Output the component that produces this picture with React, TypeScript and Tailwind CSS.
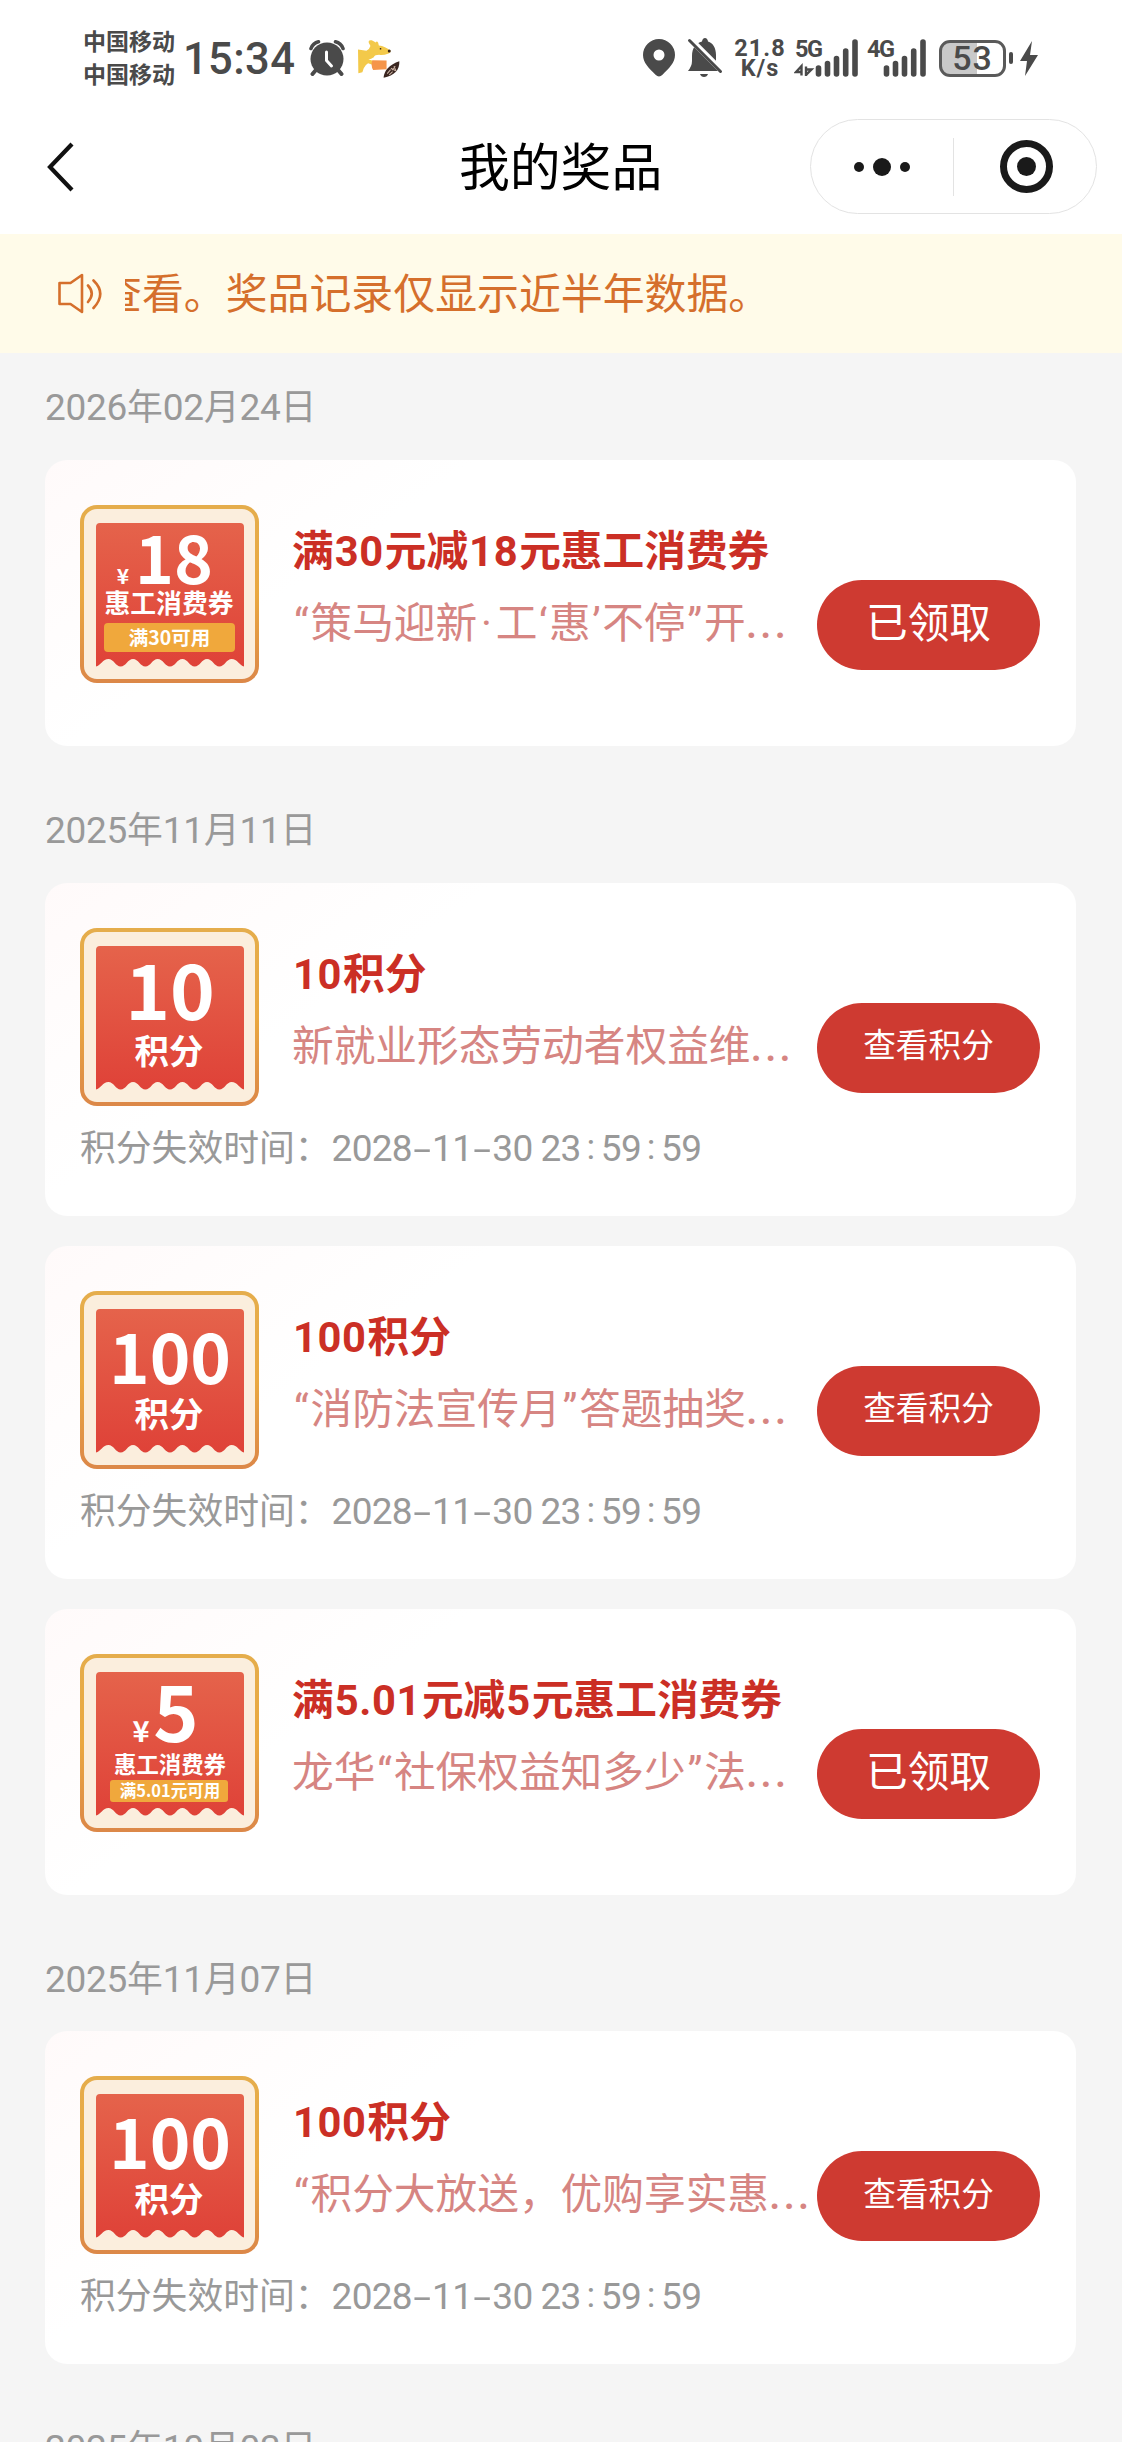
import React from 'react';

const SC = '"Noto Sans CJK SC", sans-serif';
const INK = '#4a4a4a';

function StatusBar() {
  return (
    <div className="flex h-[104px] items-center justify-between pl-[83px] pr-[84px] pt-[12px] text-[#4a4a4a]">
      <div className="flex items-center">
        <div className="flex flex-col pt-[2px] text-[23px] font-bold leading-[33px]">
          <span>中国移动</span>
          <span>中国移动</span>
        </div>
        <div className="ml-[8px] w-[112px] pt-[3px] text-[43.5px] font-medium leading-[60px] tracking-[0.4px]">15:34</div>
        <svg className="ml-[14px] h-[36px] w-[36px] shrink-0" viewBox="0 0 36 36" fill="none">
          <circle cx="18" cy="19" r="16.500" fill={INK} />
          <path d="M2 8.500Q4 3 9.500 1.800M34 8.500Q32 3 26.500 1.800" stroke={INK} strokeWidth="3.600" strokeLinecap="round" />
          <path d="M6.500 30.500l-3 3.500M29.500 30.500l3 3.500" stroke={INK} strokeWidth="4" strokeLinecap="round" />
          <path d="M17.500 12v8.500l5 5.500" stroke="#fff" strokeWidth="3" strokeLinecap="round" strokeLinejoin="round" />
        </svg>
        <svg className="ml-[12px] h-[41px] w-[43px] shrink-0" viewBox="172 28 128 122">
          <path
            d="M175 62L200 66Q210 60 212 52L207 42Q205 33 216 35L228 41Q231 35 235 42L237 50Q256 52 272 66Q272 73 266 74Q250 80 238 78Q225 78 222 85Q214 91 206 92L220 96V108L205 103Q196 108 192 118L188 130L176 133Z"
            fill="#f3c94a"
          />
          <path d="M218 94l42 1v26l-40 2q-8-14-2-29z" fill="#f5954a" />
          <circle cx="268" cy="67" r="4.500" fill="#3a2418" />
          <circle cx="242" cy="60" r="2.500" fill="#3a2418" />
          <path d="M251 146Q254 112 298 97Q300 136 251 146z" fill="#3a2620" />
          <path d="M262 134l10-12M268 138l10-10M273 118l14 8M282 112l6 14M276 124l10-12" stroke="#cbb3a4" strokeWidth="3" />
        </svg>
      </div>
      <div className="flex items-center">
        <svg className="h-[38px] w-[32px]" viewBox="0 0 32 38">
          <path fillRule="evenodd" d="M16 0a16 16 0 0 1 16 16c0 8-6 13-12.500 19.800q-3.500 3.500-7 0C6 29 0 24 0 16A16 16 0 0 1 16 0zm0 10.500a5.500 5.500 0 1 0 0 11 5.500 5.500 0 0 0 0-11z" fill={INK} />
        </svg>
        <svg className="ml-[12px] h-[40px] w-[36px]" viewBox="0 0 36 40">
          <path d="M1 33q4-5 4-10v-5c0-8 4-13 10-14.500Q15.500 0 18 0t3 3.500C26 5 29 10 29 17v6q0 5 3.500 10z" fill={INK} />
          <path d="M13 36h8q-1 3-4 3t-4-3z" fill={INK} />
          <path d="M3 1l33 33" stroke="#fff" strokeWidth="6" />
          <path d="M2.500 2.500l31 31" stroke={INK} strokeWidth="3" strokeLinecap="round" />
        </svg>
        <div className="ml-[11px] flex w-[52px] flex-col items-center text-[23.5px] font-bold leading-[20.5px]">
          <span className="tracking-[1px]">21.8</span>
          <span className="tracking-[1px]">K/s</span>
        </div>
        <Signal label="5G" arrows />
        <Signal label="4G" />
        <div className="ml-[13px] flex items-center">
          <div className="flex h-[37px] w-[67px] items-center justify-center rounded-[11px] border-[3px] border-[#5a5a5a] bg-[linear-gradient(90deg,#c9c9c9_57%,#fff_57%)] text-[34px] font-medium leading-[30px] tracking-[1px]">
            53
          </div>
          <div className="ml-[3px] h-[12px] w-[4px] rounded-full bg-[#4a4a4a]" />
          <svg className="ml-[7px] h-[35px] w-[18px]" viewBox="0 0 18 35">
            <path d="M12 0L0 20h7l-2 15L18 14h-8z" fill={INK} />
          </svg>
        </div>
      </div>
    </div>
  );
}

function Signal({ label, arrows = false }: { label: string; arrows?: boolean }) {
  return (
    <div className={arrows ? 'relative ml-[9px] h-[38px] w-[63px]' : 'relative ml-[9px] h-[38px] w-[59px]'}>
      <span className="absolute left-0 top-0 text-[23.5px] font-bold leading-[20px] tracking-[-1.5px]">{label}</span>
      <svg className="absolute right-0 top-0 h-[38px] w-[64px]" viewBox="0 0 64 38">
        <path d="M24.500 35v-6M33.500 35V24.500M42.500 35V19.500M51.700 35V12M61 35V3" stroke={INK} strokeWidth="5.600" strokeLinecap="round" />
        {arrows && <path d="M7.500 36.500V27l-5.500 6h5M12 27.500v9.500M12 36l5.500-5.500h-5" stroke={INK} strokeWidth="2.400" fill="none" />}
      </svg>
    </div>
  );
}

function NavBar() {
  return (
    <div className="flex h-[130px] items-center pl-[45px] pr-[25px]">
      <svg className="mt-[-4px] h-[50px] w-[40px]" viewBox="0 0 40 50" fill="none">
        <path d="M27 2L5 25l22 23" stroke="#111" strokeWidth="4.200" />
      </svg>
      <h1 className="ml-[374px] text-[50.8px] font-normal text-black">我的奖品</h1>
      <div className="ml-auto mt-[-5px] flex h-[95px] w-[287px] items-center rounded-full border border-[#e3e3e3] bg-white">
        <div className="flex w-[142px] items-center justify-center gap-[9px]">
          <i className="size-[10px] rounded-full bg-[#1a1a1a]" />
          <i className="size-[18px] rounded-full bg-[#1a1a1a]" />
          <i className="size-[10px] rounded-full bg-[#1a1a1a]" />
        </div>
        <div className="h-[58px] w-px bg-[#e3e3e3]" />
        <div className="flex flex-1 items-center justify-center pl-[3px]">
          <div className="flex size-[53px] items-center justify-center rounded-full border-[7px] border-[#1a1a1a]">
            <i className="size-[19px] rounded-full bg-[#1a1a1a]" />
          </div>
        </div>
      </div>
    </div>
  );
}

function Notice() {
  return (
    <div className="flex h-[119px] items-center bg-[#fffbe9] pl-[56px] text-[#d56f2c]">
      <svg className="h-[44px] w-[46px] shrink-0" viewBox="0 0 46 44" fill="none" stroke="currentColor" strokeWidth="2.600">
        <path d="M3.500 11h11L26 3v37L14.500 32H3.500z" strokeLinejoin="round" />
        <path d="M32 13.500q7.500 8 0 16.500M37.500 8.500q13.500 13 0 27.500" strokeLinecap="round" />
      </svg>
      <div className="ml-[23px] flex flex-1 overflow-hidden pt-[2px]">
        <span className="ml-[-25px] whitespace-nowrap text-[41.9px] leading-[60px]">查看。奖品记录仅显示近半年数据。</span>
      </div>
    </div>
  );
}

type Art = { amount: string; kind: 'points' } | { amount: string; kind: 'coupon'; limit: string; small?: boolean };

function Badge({ art }: { art: Art }) {
  const t = { fontFamily: SC, fill: '#fff', fontWeight: 700, textAnchor: 'middle' as const };
  return (
    <svg className="h-[178px] w-[179px] shrink-0" viewBox="0 0 179 178">
      <defs>
        <linearGradient id="gold" x1="0" y1="0" x2="0" y2="1">
          <stop offset="0" stopColor="#e5ad4c" />
          <stop offset="0.5" stopColor="#eaa840" />
          <stop offset="1" stopColor="#dc8848" />
        </linearGradient>
        <linearGradient id="red" x1="0" y1="0" x2="0" y2="1">
          <stop offset="0" stopColor="#e5634b" />
          <stop offset="1" stopColor="#df4238" />
        </linearGradient>
      </defs>
      <rect x="2" y="2" width="175" height="174" rx="15" fill="#fbeedd" stroke="url(#gold)" strokeWidth="4" />
      <path
        d="M16 22q0-4 4-4h140q4 0 4 4v139.500c-4-1-7-7.500-12.300-7.500s-7 7.500-12.367 7.500c-5 0-7-7.500-12.300-7.500s-7 7.500-12.367 7.500c-5 0-7-7.500-12.300-7.500s-7 7.500-12.367 7.500c-5 0-7-7.500-12.300-7.500s-7 7.500-12.367 7.500c-5 0-7-7.500-12.300-7.500s-7 7.500-12.367 7.500c-5 0-7-7.500-12.300-7.500s-8 6.500-12.367 7.500z"
        fill="url(#red)"
      />
      {art.kind === 'points' ? (
        <>
          <text x="90" y={art.amount.length > 2 ? 93 : 92} fontSize={art.amount.length > 2 ? 69 : 76} {...t}>{art.amount}</text>
          <text x="89" y="136" fontSize="34.500" {...t}>积分</text>
        </>
      ) : art.small ? (
        <>
          <text x="61" y="88" fontSize="29" {...t}>¥</text>
          <text x="96" y="88" fontSize="77" {...t}>{art.amount}</text>
          <text x="90" y="119" fontSize="22.400" {...t}>惠工消费券</text>
          <rect x="30" y="126" width="118" height="22" rx="3" fill="#f0a83c" />
          <text x="90" y="143" fontSize="16.500" {...t}>{art.limit}</text>
        </>
      ) : (
        <>
          <text x="43" y="79" fontSize="21" {...t}>¥</text>
          <text x="94" y="79" fontSize="66" {...t}>{art.amount}</text>
          <text x="89" y="107.500" fontSize="25.800" {...t}>惠工消费券</text>
          <rect x="24" y="118" width="131" height="29" rx="4" fill="#f0a83c" />
          <text x="89.500" y="139.500" fontSize="19.500" {...t}>{art.limit}</text>
        </>
      )}
    </svg>
  );
}

function cellClass(c: string) {
  if (c === ' ') return 'w-[8px]';
  if (c === '-') return 'w-[20.1px] origin-center scale-x-[1.8] text-center';
  if (c === ':') return 'relative -top-[2px] w-[20.1px] text-center';
  return 'w-[20.1px] text-center text-[37px]';
}

function Expiry({ value }: { value: string }) {
  return (
    <p className="mt-[18px] flex whitespace-pre text-[35.8px] leading-[50px] text-[#999]">
      <span className="mr-[1px]">积分失效时间：</span>
      {value.split('').map((c, i) => (
        <span key={i} className={cellClass(c)}>{c}</span>
      ))}
    </p>
  );
}

function withDigits(text: string, digitClass: string) {
  return text.split(/([\d.]+)/).map((part, i) =>
    i % 2 ? <span key={i} className={digitClass}>{part}</span> : part,
  );
}

function Description({ text }: { text: string }) {
  return (
    <p className="mt-[12px] text-[41.7px] leading-[60px] text-[#d68582]">
      {text.split(/([“”‘’·])/).map((part, i) => {
        if (i % 2 === 0) return part;
        const wide = part === '“' || part === '”' || part === '·';
        return (
          <span key={i} className={wide ? 'inline-block w-[18.5px] text-center' : 'inline-block w-[11.5px] text-center'}>
            {part}
          </span>
        );
      })}
      <span className="font-medium tracking-[2.8px]">...</span>
    </p>
  );
}

type Prize = { art: Art; title: string; desc: string; action: string; expires?: string };

function Card({ prize }: { prize: Prize }) {
  return (
    <article
      className={
        prize.expires
          ? 'h-[333px] rounded-[22px] bg-[linear-gradient(145deg,#fffafa_0%,#ffffff_30%)] pl-[35px] pr-[36px] pt-[45px]'
          : 'h-[286px] rounded-[22px] bg-[linear-gradient(145deg,#fffafa_0%,#ffffff_30%)] pl-[35px] pr-[36px] pt-[45px]'
      }
    >
      <div className="flex h-[178px]">
        <Badge art={prize.art} />
        <div className="ml-[33px] mt-[17px] flex w-[525px] shrink-0 flex-col whitespace-nowrap">
          <h2 className="text-[41.7px] font-bold leading-[60px] text-[#cb2f25]">
            {withDigits(prize.title, 'px-[1px] tracking-[0.6px]')}
          </h2>
          <Description text={prize.desc} />
        </div>
        <button
          className={
            prize.action.length > 3
              ? 'mt-[75px] h-[90px] w-[223px] shrink-0 rounded-full bg-[#ce3a31] pb-[3px] text-[32.7px] leading-none text-white'
              : 'mt-[75px] h-[90px] w-[223px] shrink-0 rounded-full bg-[#ce3a31] pb-[2px] text-[41.7px] leading-none text-white'
          }
        >
          {prize.action}
        </button>
      </div>
      {prize.expires && <Expiry value={prize.expires} />}
    </article>
  );
}

const EXPIRES = '2028-11-30 23:59:59';

const groups: { date: string; prizes: Prize[] }[] = [
  {
    date: '2026年02月24日',
    prizes: [
      {
        art: { kind: 'coupon', amount: '18', limit: '满30可用' },
        title: '满30元减18元惠工消费券',
        desc: '“策马迎新·工‘惠’不停”开',
        action: '已领取',
      },
    ],
  },
  {
    date: '2025年11月11日',
    prizes: [
      {
        art: { kind: 'points', amount: '10' },
        title: '10积分',
        desc: '新就业形态劳动者权益维',
        action: '查看积分',
        expires: EXPIRES,
      },
      {
        art: { kind: 'points', amount: '100' },
        title: '100积分',
        desc: '“消防法宣传月”答题抽奖',
        action: '查看积分',
        expires: EXPIRES,
      },
      {
        art: { kind: 'coupon', amount: '5', limit: '满5.01元可用', small: true },
        title: '满5.01元减5元惠工消费券',
        desc: '龙华“社保权益知多少”法',
        action: '已领取',
      },
    ],
  },
  {
    date: '2025年11月07日',
    prizes: [
      {
        art: { kind: 'points', amount: '100' },
        title: '100积分',
        desc: '“积分大放送，优购享实惠',
        action: '查看积分',
        expires: EXPIRES,
      },
    ],
  },
  { date: '2025年10月03日', prizes: [] },
];

export default function App() {
  return (
    <div className="h-[2442px] w-[1122px] overflow-hidden bg-[#f5f5f5] font-[Roboto,'Noto_Sans_CJK_SC',sans-serif]">
      <header className="bg-white">
        <StatusBar />
        <NavBar />
      </header>
      <Notice />
      <main className="flex flex-col gap-[30px] pl-[45px] pr-[46px]">
        {groups.map((g) => (
          <section key={g.date}>
            <div className="flex h-[106.8px] items-center pt-[3px] text-[35.8px] text-[#999]">
              <span>{withDigits(g.date, 'text-[37px] tracking-[-0.3px]')}</span>
            </div>
            <div className="flex flex-col gap-[30px]">
              {g.prizes.map((p, i) => (
                <Card key={i} prize={p} />
              ))}
            </div>
          </section>
        ))}
      </main>
    </div>
  );
}
